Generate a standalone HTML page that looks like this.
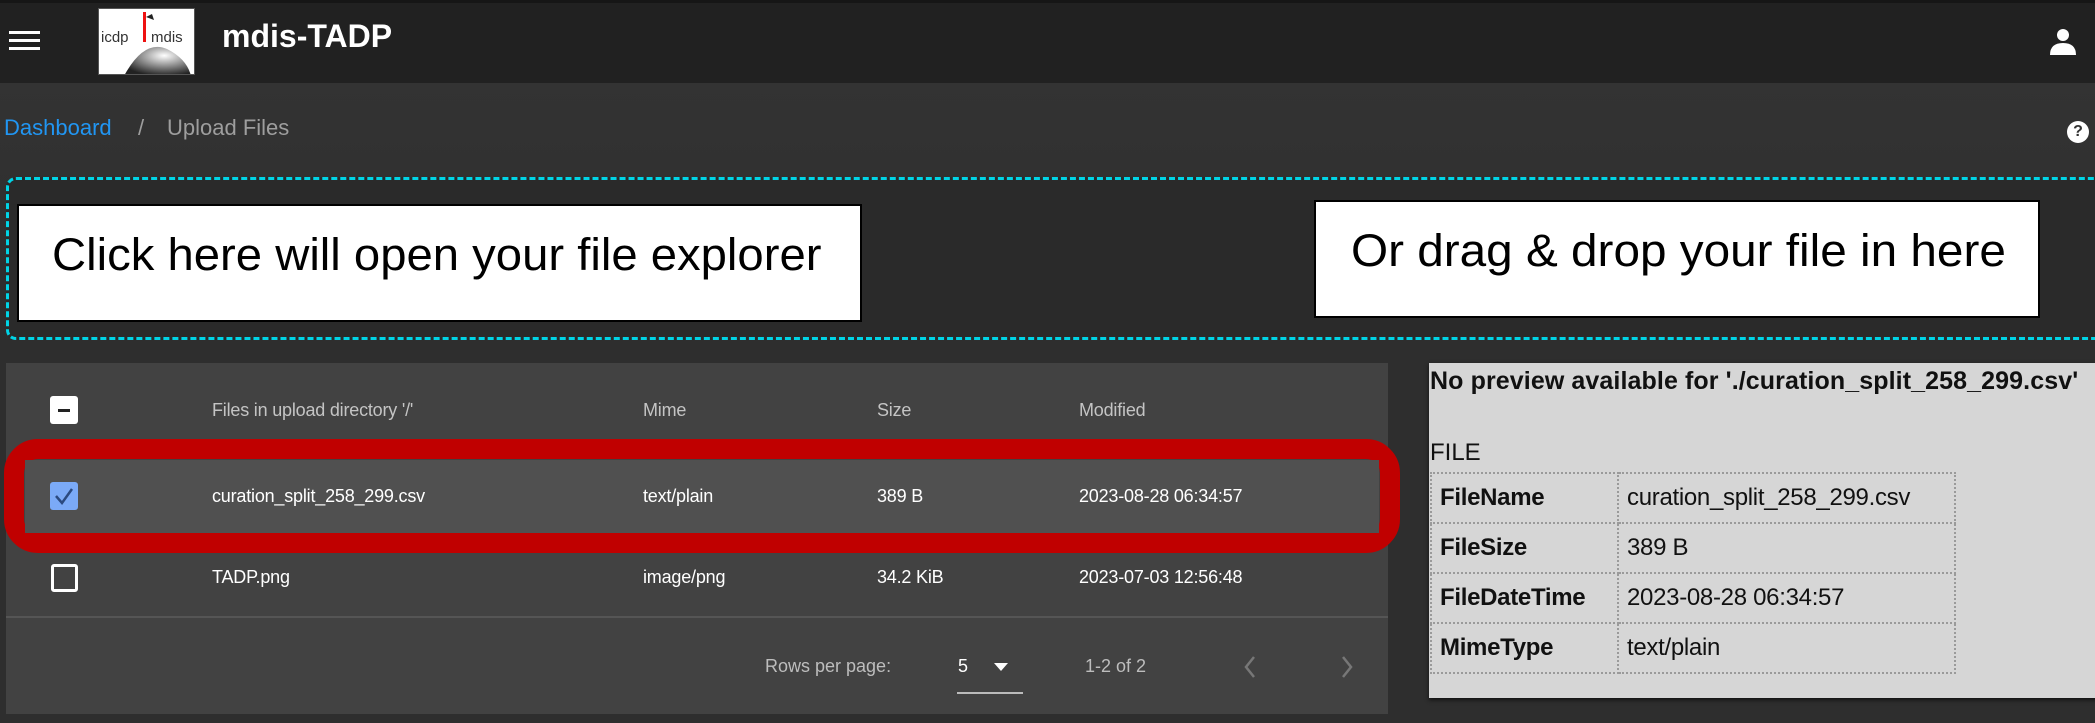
<!DOCTYPE html>
<html><head><meta charset="utf-8"><style>
*{margin:0;padding:0;box-sizing:border-box}
body{width:2095px;height:723px;overflow:hidden;background:#2f2f2f;font-family:"Liberation Sans",Arial,sans-serif;position:relative}
.a{position:absolute;white-space:nowrap}
.hdr{left:0;top:0;width:2095px;height:83px;background:#212121;border-top:3px solid #161616}
.ham{left:9px;width:31px;height:3px;background:#fff}
.cell{font-size:18px;color:#fff;letter-spacing:-0.2px}
.th{font-size:18px;color:#c4c4c4;letter-spacing:-0.2px}
.cb{width:28px;height:28px;border-radius:3px}
.pt td{border:2px dotted #9a9a9a;font-size:24px;color:#111;height:50px;padding-left:8px;letter-spacing:-0.3px}
.pt{border-collapse:collapse}
</style></head><body>
<div class="a hdr"></div>
<div class="a ham" style="top:31px"></div>
<div class="a ham" style="top:39px"></div>
<div class="a ham" style="top:47px"></div>
<div class="a" style="left:98px;top:8px;width:97px;height:67px;background:#fff;border:1px solid #555;overflow:hidden">
<svg width="97" height="67" viewBox="0 0 97 67"><defs><radialGradient id="g" cx="0.6" cy="0.3" r="0.7"><stop offset="0" stop-color="#fff"/><stop offset="1" stop-color="#222"/></radialGradient></defs>
<path d="M25 67 Q45 30 68 40 Q88 50 92 67Z" fill="url(#g)"/>
<rect x="44" y="3" width="3" height="30" fill="#e11"/>
<path d="M47 8 l6 -3 l2 6z" fill="#222"/>
<text x="2" y="33" font-family="Liberation Sans" font-size="15" fill="#333">icdp</text>
<text x="52" y="33" font-family="Liberation Sans" font-size="15" fill="#333">mdis</text></svg></div>
<div class="a" style="left:222px;top:18px;font-size:32px;font-weight:bold;color:#fff">mdis-TADP</div>
<svg class="a" style="left:2049px;top:28px" width="28" height="28" viewBox="0 0 28 28"><circle cx="14" cy="7" r="6" fill="#fff"/><path d="M1 27 Q1 15 14 15 Q27 15 27 27Z" fill="#fff"/></svg>
<div class="a" style="left:0;top:83px;width:2095px;height:280px;background:linear-gradient(#333,#2c2c2c)"></div>
<div class="a" style="left:4px;top:115px;font-size:22px;color:#2196f3">Dashboard</div>
<div class="a" style="left:138px;top:115px;font-size:22px;color:#9e9e9e">/</div>
<div class="a" style="left:167px;top:115px;font-size:22px;color:#9e9e9e">Upload Files</div>
<div class="a" style="left:2067px;top:121px;width:22px;height:22px;border-radius:50%;background:#fff;color:#333;font-size:16px;font-weight:bold;text-align:center;line-height:22px">?</div>
<div class="a" style="left:6px;top:177px;width:2110px;height:163px;border:3px dashed #00d4e6;border-radius:10px;background:#2a2a2a"></div>
<div class="a" style="left:17px;top:204px;width:845px;height:118px;background:#fff;border:2px solid #000"></div>
<div class="a" style="left:52px;top:229px;font-size:45px;color:#000;transform:scaleX(1.05);transform-origin:0 0">Click here will open your file explorer</div>
<div class="a" style="left:1314px;top:200px;width:726px;height:118px;background:#fff;border:2px solid #000"></div>
<div class="a" style="left:1351px;top:225px;font-size:45px;color:#000;transform:scaleX(1.06);transform-origin:0 0">Or drag &amp; drop your file in here</div>
<div class="a" style="left:0;top:340px;width:2095px;height:383px;background:#2e2e2e"></div>
<div class="a" style="left:6px;top:363px;width:1382px;height:351px;background:#424242"></div>
<div class="a cb" style="left:50px;top:396px;background:#fff"></div>
<div class="a" style="left:58px;top:409px;width:12px;height:3px;background:#222"></div>
<div class="a th" style="left:212px;top:400px">Files in upload directory '/'</div>
<div class="a th" style="left:643px;top:400px">Mime</div>
<div class="a th" style="left:877px;top:400px">Size</div>
<div class="a th" style="left:1079px;top:400px">Modified</div>
<div class="a" style="left:4px;top:439px;width:1396px;height:114px;border:20px solid #c00000;border-radius:34px"></div>
<div class="a" style="left:25px;top:460px;width:1354px;height:73px;background:#505050"></div>
<div class="a cb" style="left:50px;top:482px;background:#7baaf7"></div>
<svg class="a" style="left:50px;top:482px" width="28" height="28"><path d="M6 14 L12 21 L22 7" stroke="#2b4a80" stroke-width="2.5" fill="none"/></svg>
<div class="a cell" style="left:212px;top:486px">curation_split_258_299.csv</div>
<div class="a cell" style="left:643px;top:486px">text/plain</div>
<div class="a cell" style="left:877px;top:486px">389 B</div>
<div class="a cell" style="left:1079px;top:486px">2023-08-28 06:34:57</div>
<div class="a cb" style="left:51px;top:564px;border:3px solid #fff;width:27px;height:28px"></div>
<div class="a cell" style="left:212px;top:567px">TADP.png</div>
<div class="a cell" style="left:643px;top:567px">image/png</div>
<div class="a cell" style="left:877px;top:567px">34.2 KiB</div>
<div class="a cell" style="left:1079px;top:567px">2023-07-03 12:56:48</div>
<div class="a" style="left:6px;top:616px;width:1382px;height:2px;background:#555"></div>
<div class="a" style="left:765px;top:656px;font-size:18px;color:#bdbdbd">Rows per page:</div>
<div class="a" style="left:958px;top:656px;font-size:18px;color:#fff">5</div>
<svg class="a" style="left:993px;top:661px" width="16" height="12"><path d="M1 2 L15 2 L8 10Z" fill="#fff"/></svg>
<div class="a" style="left:957px;top:692px;width:66px;height:2px;background:#bbb"></div>
<div class="a" style="left:1085px;top:656px;font-size:18px;color:#bdbdbd">1-2 of 2</div>
<svg class="a" style="left:1242px;top:654px" width="16" height="26"><path d="M12 3 L4 13 L12 23" stroke="#777" stroke-width="2.5" fill="none"/></svg>
<svg class="a" style="left:1339px;top:654px" width="16" height="26"><path d="M4 3 L12 13 L4 23" stroke="#777" stroke-width="2.5" fill="none"/></svg>
<div class="a" style="left:1429px;top:363px;width:680px;height:335px;background:#d6d6d6;box-shadow:0 2px 4px #111"></div>
<div class="a" style="left:1430px;top:367px;font-size:25px;font-weight:bold;color:#111;letter-spacing:0.1px">No preview available for './curation_split_258_299.csv'</div>
<div class="a" style="left:1430px;top:439px;font-size:24px;color:#111">FILE</div>
<table class="a pt" style="left:1430px;top:472px;width:526px">
<tr><td style="width:187px;font-weight:bold">FileName</td><td>curation_split_258_299.csv</td></tr>
<tr><td style="font-weight:bold">FileSize</td><td>389 B</td></tr>
<tr><td style="font-weight:bold">FileDateTime</td><td>2023-08-28 06:34:57</td></tr>
<tr><td style="font-weight:bold">MimeType</td><td>text/plain</td></tr>
</table>
</body></html>
